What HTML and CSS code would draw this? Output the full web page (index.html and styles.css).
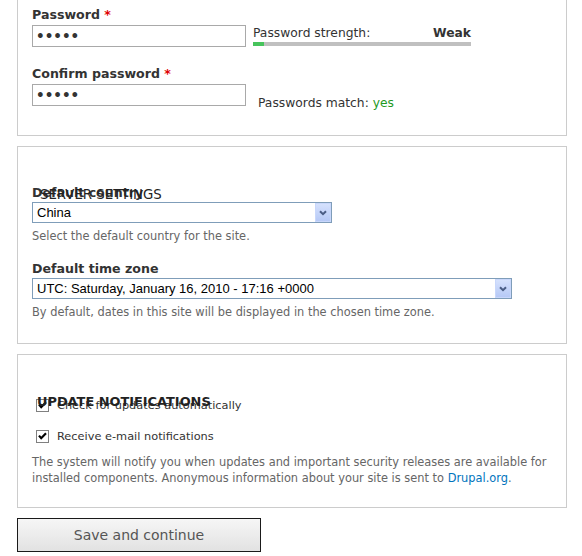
FILE: index.html
```html
<!DOCTYPE html>
<html lang="en">
<head>
<meta charset="utf-8">
<title>Configure site</title>
<link rel="stylesheet" href="styles.css">
</head>
<body>
<form class="page">
  <fieldset class="box box-account">
    <div class="item">
      <label class="label" for="pass1">Password <span class="req">*</span></label>
      <div class="row">
        <input class="text" id="pass1" type="password" value="admin">
        <div class="strength">
          <div class="strength-text"><span>Password strength:</span><strong>Weak</strong></div>
          <div class="bar"><div class="bar-fill" style="width:11px"></div></div>
        </div>
      </div>
    </div>
    <div class="item item-confirm">
      <label class="label" for="pass2">Confirm password <span class="req">*</span></label>
      <div class="row">
        <input class="text" id="pass2" type="password" value="admin">
        <div class="match">Passwords match: <span class="yes">yes</span></div>
      </div>
    </div>
  </fieldset>

  <fieldset class="box box-server">
    <legend class="legend legend-server">Server settings</legend>
    <div class="item">
      <label class="label label-sel" for="country">Default country</label>
      <div class="select-wrap w-country">
        <select class="select" id="country"><option>China</option></select>
        <span class="select-btn"><svg width="8" height="6" viewBox="0 0 8 6"><path d="M1 1.2 L4 4.2 L7 1.2" fill="none" stroke="#4a5d85" stroke-width="2"/></svg></span>
      </div>
      <div class="desc">Select the default country for the site.</div>
    </div>
    <div class="item item-tz">
      <label class="label label-sel" for="tz">Default time zone</label>
      <div class="select-wrap w-tz">
        <select class="select" id="tz"><option>UTC: Saturday, January 16, 2010 - 17:16 +0000</option></select>
        <span class="select-btn"><svg width="8" height="6" viewBox="0 0 8 6"><path d="M1 1.2 L4 4.2 L7 1.2" fill="none" stroke="#4a5d85" stroke-width="2"/></svg></span>
      </div>
      <div class="desc">By default, dates in this site will be displayed in the chosen time zone.</div>
    </div>
  </fieldset>

  <fieldset class="box box-update">
    <legend class="legend legend-update">Update notifications</legend>
    <div class="check">
      <svg class="check-box" width="13" height="13" viewBox="0 0 13 13"><rect x="0.5" y="0.5" width="12" height="12" fill="#fff" stroke="#808080"/><path d="M3 5.6 L5.2 8.2 L10 3.2" fill="none" stroke="#000" stroke-width="2.2"/></svg>
      <span>Check for updates automatically</span>
    </div>
    <div class="check check-second">
      <svg class="check-box" width="13" height="13" viewBox="0 0 13 13"><rect x="0.5" y="0.5" width="12" height="12" fill="#fff" stroke="#808080"/><path d="M3 5.6 L5.2 8.2 L10 3.2" fill="none" stroke="#000" stroke-width="2.2"/></svg>
      <span>Receive e-mail notifications</span>
    </div>
    <div class="desc desc-update">The system will notify you when updates and important security releases are available for installed components. Anonymous information about your site is sent to <a class="link" href="#">Drupal.org</a>.</div>
  </fieldset>

  <button class="submit" type="button">Save and continue</button>
</form>
</body>
</html>
```

FILE: styles.css
```css
* { box-sizing: border-box; }

body {
  margin: 0;
  background: #fff;
  color: #333;
  font-family: "DejaVu Sans", Verdana, sans-serif;
}

.page {
  padding-left: 17px;
  width: 567px;
}

.box {
  position: relative;
  width: 550px;
  min-width: 0;
  margin: 0;
  border: 1px solid #cccccc;
  padding: 0 14px;
}

.box + .box { margin-top: 10px; }

.box-account {
  border-top: 0;
  padding-top: 7px;
  padding-bottom: 24px;
}

.box-server {
  padding-top: 38px;
  padding-bottom: 23px;
}

.box-update {
  padding-top: 42px;
  padding-bottom: 21px;
}

.legend {
  position: absolute;
  padding: 0;
  margin: 0;
  text-transform: uppercase;
  color: #222;
  line-height: 16px;
  white-space: nowrap;
}

.legend-server {
  top: 40px;
  left: 22px;
  font-size: 13.3px;
  font-weight: normal;
}

.legend-update {
  top: 39px;
  left: 19px;
  font-size: 12.9px;
  font-weight: bold;
}

.label {
  display: block;
  font-weight: bold;
  font-size: 12.6px;
  line-height: 16px;
  margin-bottom: 2px;
  color: #333;
}

.label-sel { margin-bottom: 1px; }

.req { color: #e00000; }

.item-confirm { margin-top: 19px; }
.item-tz { margin-top: 17px; }

.row {
  display: flex;
  align-items: flex-start;
}

.text {
  width: 214px;
  height: 22px;
  margin: 0;
  border: 1px solid #a9a9a9;
  padding: 0 3px;
  font-family: "DejaVu Sans", Verdana, sans-serif;
  font-weight: bold;
  font-size: 13.5px;
  color: #333;
  background: #fff;
}

.strength {
  margin-left: 7px;
  width: 218px;
}

.strength-text {
  display: flex;
  justify-content: space-between;
  font-size: 12.3px;
  line-height: 16px;
}

.strength-text strong { font-weight: bold; }

.bar {
  height: 4px;
  margin-top: 1px;
  background: #c0c0c0;
}

.bar-fill {
  height: 100%;
  background: #47c45c;
}

.match {
  margin-left: 12px;
  margin-top: 11px;
  font-size: 12.3px;
  line-height: 16px;
}

.yes { color: #1f9a1f; }

.select-wrap {
  position: relative;
  height: 21px;
}

.w-country { width: 300px; }
.w-tz { width: 480px; }

.select {
  -webkit-appearance: none;
  appearance: none;
  display: block;
  width: 100%;
  height: 21px;
  margin: 0;
  border: 1px solid #7f9db9;
  border-radius: 0;
  padding: 0 20px 0 4px;
  background: #fff;
  color: #000;
  font-family: "Liberation Sans", Arial, sans-serif;
  font-size: 13px;
  outline: none;
}

.select-btn {
  position: absolute;
  top: 1px;
  right: 1px;
  bottom: 1px;
  width: 16px;
  display: flex;
  align-items: center;
  justify-content: center;
  border: 1px solid #c8d7fb;
  background: linear-gradient(#d5e1fd, #b6c9f6);
  pointer-events: none;
}

.desc {
  margin-top: 6px;
  font-size: 11.4px;
  line-height: 15px;
  color: #666;
}

.check {
  display: flex;
  align-items: center;
  height: 16px;
  font-size: 11.35px;
  line-height: 16px;
  color: #333;
}

.check-box {
  flex: none;
  margin-left: 4px;
  margin-right: 8px;
}

.check-second { margin-top: 15px; }

.desc-update {
  margin-top: 10px;
  line-height: 16px;
}

.link {
  color: #0074bd;
  text-decoration: none;
}

.submit {
  display: block;
  width: 244px;
  height: 34px;
  margin: 10px 0 0 0;
  padding: 0;
  border: 1px solid #1a1a1a;
  border-radius: 0;
  background: linear-gradient(#f6f6f6, #e2e2e2);
  color: #555;
  font-family: "DejaVu Sans", Verdana, sans-serif;
  font-size: 14px;
  cursor: pointer;
}
```
